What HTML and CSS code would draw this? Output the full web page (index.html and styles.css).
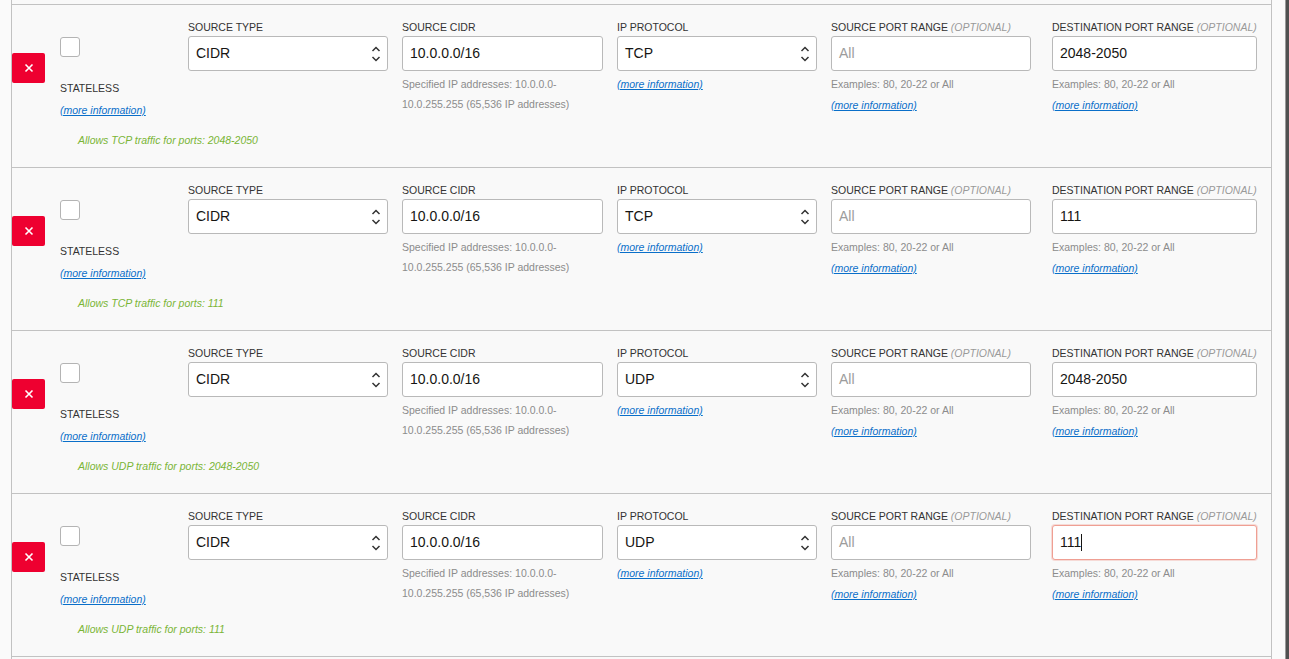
FILE: index.html
```html
<!DOCTYPE html>
<html lang="en">
<head>
<meta charset="utf-8">
<title>Ingress Rules</title>
<link rel="stylesheet" href="styles.css">
</head>
<body>
<div class="page">
  <div class="panel">
    <div class="stub"></div>

    <section class="rule">
      <div class="rule-main">
        <div class="remove-col">
          <button class="remove-btn" aria-label="Remove rule"><svg width="10" height="10" viewBox="0 0 10 10"><path d="M1.5 1.5 L8.5 8.5 M8.5 1.5 L1.5 8.5" stroke="#fff" stroke-width="1.6" fill="none"/></svg></button>
        </div>
        <div class="stateless-col">
          <span class="checkbox"></span>
          <div class="stateless-label">STATELESS</div>
          <a class="more" href="#">(more information)</a>
        </div>
        <div class="fields">
          <div class="field">
            <div class="field-label">SOURCE TYPE</div>
            <div class="box select">CIDR<svg class="chev" width="10" height="16" viewBox="0 0 10 16"><path d="M1.5 5 L5 1.5 L8.5 5 M1.5 11 L5 14.5 L8.5 11" stroke="#333" stroke-width="1.5" fill="none"/></svg></div>
          </div>
          <div class="field wide">
            <div class="field-label">SOURCE CIDR</div>
            <div class="box">10.0.0.0/16</div>
            <div class="help">Specified IP addresses: 10.0.0.0-<br>10.0.255.255 (65,536 IP addresses)</div>
          </div>
          <div class="field">
            <div class="field-label">IP PROTOCOL</div>
            <div class="box select">TCP<svg class="chev" width="10" height="16" viewBox="0 0 10 16"><path d="M1.5 5 L5 1.5 L8.5 5 M1.5 11 L5 14.5 L8.5 11" stroke="#333" stroke-width="1.5" fill="none"/></svg></div>
            <a class="more help-link" href="#">(more information)</a>
          </div>
          <div class="field">
            <div class="field-label">SOURCE PORT RANGE <em>(OPTIONAL)</em></div>
            <div class="box placeholder">All</div>
            <div class="help">Examples: 80, 20-22 or All</div>
            <a class="more port-link" href="#">(more information)</a>
          </div>
          <div class="field dest">
            <div class="field-label">DESTINATION PORT RANGE <em>(OPTIONAL)</em></div>
            <div class="box">2048-2050</div>
            <div class="help">Examples: 80, 20-22 or All</div>
            <a class="more port-link" href="#">(more information)</a>
          </div>
        </div>
      </div>
      <div class="note">Allows TCP traffic for ports: 2048-2050</div>
    </section>

    <section class="rule">
      <div class="rule-main">
        <div class="remove-col">
          <button class="remove-btn" aria-label="Remove rule"><svg width="10" height="10" viewBox="0 0 10 10"><path d="M1.5 1.5 L8.5 8.5 M8.5 1.5 L1.5 8.5" stroke="#fff" stroke-width="1.6" fill="none"/></svg></button>
        </div>
        <div class="stateless-col">
          <span class="checkbox"></span>
          <div class="stateless-label">STATELESS</div>
          <a class="more" href="#">(more information)</a>
        </div>
        <div class="fields">
          <div class="field">
            <div class="field-label">SOURCE TYPE</div>
            <div class="box select">CIDR<svg class="chev" width="10" height="16" viewBox="0 0 10 16"><path d="M1.5 5 L5 1.5 L8.5 5 M1.5 11 L5 14.5 L8.5 11" stroke="#333" stroke-width="1.5" fill="none"/></svg></div>
          </div>
          <div class="field wide">
            <div class="field-label">SOURCE CIDR</div>
            <div class="box">10.0.0.0/16</div>
            <div class="help">Specified IP addresses: 10.0.0.0-<br>10.0.255.255 (65,536 IP addresses)</div>
          </div>
          <div class="field">
            <div class="field-label">IP PROTOCOL</div>
            <div class="box select">TCP<svg class="chev" width="10" height="16" viewBox="0 0 10 16"><path d="M1.5 5 L5 1.5 L8.5 5 M1.5 11 L5 14.5 L8.5 11" stroke="#333" stroke-width="1.5" fill="none"/></svg></div>
            <a class="more help-link" href="#">(more information)</a>
          </div>
          <div class="field">
            <div class="field-label">SOURCE PORT RANGE <em>(OPTIONAL)</em></div>
            <div class="box placeholder">All</div>
            <div class="help">Examples: 80, 20-22 or All</div>
            <a class="more port-link" href="#">(more information)</a>
          </div>
          <div class="field dest">
            <div class="field-label">DESTINATION PORT RANGE <em>(OPTIONAL)</em></div>
            <div class="box">111</div>
            <div class="help">Examples: 80, 20-22 or All</div>
            <a class="more port-link" href="#">(more information)</a>
          </div>
        </div>
      </div>
      <div class="note">Allows TCP traffic for ports: 111</div>
    </section>

    <section class="rule">
      <div class="rule-main">
        <div class="remove-col">
          <button class="remove-btn" aria-label="Remove rule"><svg width="10" height="10" viewBox="0 0 10 10"><path d="M1.5 1.5 L8.5 8.5 M8.5 1.5 L1.5 8.5" stroke="#fff" stroke-width="1.6" fill="none"/></svg></button>
        </div>
        <div class="stateless-col">
          <span class="checkbox"></span>
          <div class="stateless-label">STATELESS</div>
          <a class="more" href="#">(more information)</a>
        </div>
        <div class="fields">
          <div class="field">
            <div class="field-label">SOURCE TYPE</div>
            <div class="box select">CIDR<svg class="chev" width="10" height="16" viewBox="0 0 10 16"><path d="M1.5 5 L5 1.5 L8.5 5 M1.5 11 L5 14.5 L8.5 11" stroke="#333" stroke-width="1.5" fill="none"/></svg></div>
          </div>
          <div class="field wide">
            <div class="field-label">SOURCE CIDR</div>
            <div class="box">10.0.0.0/16</div>
            <div class="help">Specified IP addresses: 10.0.0.0-<br>10.0.255.255 (65,536 IP addresses)</div>
          </div>
          <div class="field">
            <div class="field-label">IP PROTOCOL</div>
            <div class="box select">UDP<svg class="chev" width="10" height="16" viewBox="0 0 10 16"><path d="M1.5 5 L5 1.5 L8.5 5 M1.5 11 L5 14.5 L8.5 11" stroke="#333" stroke-width="1.5" fill="none"/></svg></div>
            <a class="more help-link" href="#">(more information)</a>
          </div>
          <div class="field">
            <div class="field-label">SOURCE PORT RANGE <em>(OPTIONAL)</em></div>
            <div class="box placeholder">All</div>
            <div class="help">Examples: 80, 20-22 or All</div>
            <a class="more port-link" href="#">(more information)</a>
          </div>
          <div class="field dest">
            <div class="field-label">DESTINATION PORT RANGE <em>(OPTIONAL)</em></div>
            <div class="box">2048-2050</div>
            <div class="help">Examples: 80, 20-22 or All</div>
            <a class="more port-link" href="#">(more information)</a>
          </div>
        </div>
      </div>
      <div class="note">Allows UDP traffic for ports: 2048-2050</div>
    </section>

    <section class="rule">
      <div class="rule-main">
        <div class="remove-col">
          <button class="remove-btn" aria-label="Remove rule"><svg width="10" height="10" viewBox="0 0 10 10"><path d="M1.5 1.5 L8.5 8.5 M8.5 1.5 L1.5 8.5" stroke="#fff" stroke-width="1.6" fill="none"/></svg></button>
        </div>
        <div class="stateless-col">
          <span class="checkbox"></span>
          <div class="stateless-label">STATELESS</div>
          <a class="more" href="#">(more information)</a>
        </div>
        <div class="fields">
          <div class="field">
            <div class="field-label">SOURCE TYPE</div>
            <div class="box select">CIDR<svg class="chev" width="10" height="16" viewBox="0 0 10 16"><path d="M1.5 5 L5 1.5 L8.5 5 M1.5 11 L5 14.5 L8.5 11" stroke="#333" stroke-width="1.5" fill="none"/></svg></div>
          </div>
          <div class="field wide">
            <div class="field-label">SOURCE CIDR</div>
            <div class="box">10.0.0.0/16</div>
            <div class="help">Specified IP addresses: 10.0.0.0-<br>10.0.255.255 (65,536 IP addresses)</div>
          </div>
          <div class="field">
            <div class="field-label">IP PROTOCOL</div>
            <div class="box select">UDP<svg class="chev" width="10" height="16" viewBox="0 0 10 16"><path d="M1.5 5 L5 1.5 L8.5 5 M1.5 11 L5 14.5 L8.5 11" stroke="#333" stroke-width="1.5" fill="none"/></svg></div>
            <a class="more help-link" href="#">(more information)</a>
          </div>
          <div class="field">
            <div class="field-label">SOURCE PORT RANGE <em>(OPTIONAL)</em></div>
            <div class="box placeholder">All</div>
            <div class="help">Examples: 80, 20-22 or All</div>
            <a class="more port-link" href="#">(more information)</a>
          </div>
          <div class="field dest">
            <div class="field-label">DESTINATION PORT RANGE <em>(OPTIONAL)</em></div>
            <div class="box focused">111<span class="caret"></span></div>
            <div class="help">Examples: 80, 20-22 or All</div>
            <a class="more port-link" href="#">(more information)</a>
          </div>
        </div>
      </div>
      <div class="note">Allows UDP traffic for ports: 111</div>
    </section>

    <div class="tail"></div>
  </div>
  <div class="gutter"></div>
  <div class="scrollbar"></div>
</div>
</body>
</html>
```

FILE: styles.css
```css
* { box-sizing: border-box; }

html, body {
  margin: 0;
  height: 100%;
  overflow: hidden;
  background: #fafafa;
  font-family: "Liberation Sans", Arial, sans-serif;
  color: #333;
}

.page {
  display: flex;
  height: 659px;
  padding-left: 11px;
}

.panel {
  width: 1261px;
  height: 100%;
  border-left: 1px solid #c2c2c2;
  border-right: 1px solid #c2c2c2;
  background: #f9f9f9;
  display: flex;
  flex-direction: column;
}

.stub { height: 4px; flex: none; }

.rule {
  flex: none;
  height: 163px;
  border-top: 1px solid #c2c2c2;
  display: flex;
  flex-direction: column;
}

.tail {
  flex: 1;
  border-top: 1px solid #c2c2c2;
}

.gutter { flex: 1; }

.scrollbar {
  width: 4px;
  background: #505050;
  border-left: 1px solid #9a9a9a;
}

.rule-main {
  display: flex;
  height: 115px;
}

.remove-col {
  width: 48px;
  flex: none;
  padding-top: 48px;
}

.remove-btn {
  width: 33px;
  height: 30px;
  padding: 0;
  border: none;
  border-radius: 2px;
  background: #ee0030;
  display: flex;
  align-items: center;
  justify-content: center;
  cursor: pointer;
}

.remove-btn svg { display: block; }

.stateless-col {
  width: 128px;
  flex: none;
  padding-top: 32px;
  display: flex;
  flex-direction: column;
  align-items: flex-start;
}

.checkbox {
  display: block;
  width: 20px;
  height: 20px;
  background: #fff;
  border: 1px solid #b4b4b4;
  border-radius: 3px;
}

.stateless-label {
  margin-top: 24px;
  font-size: 10.5px;
  line-height: 14px;
  color: #333;
}

.stateless-col .more { margin-top: 5px; }

.more {
  display: block;
  font-size: 10.5px;
  line-height: 20px;
  font-style: italic;
  color: #0a6fc9;
  text-decoration: underline;
}

.fields {
  display: flex;
  gap: 14px;
  padding-top: 15px;
}

.field {
  width: 200px;
  flex: none;
  display: flex;
  flex-direction: column;
  align-items: flex-start;
}

.field.wide { width: 201px; }

.field.dest {
  width: 205px;
  margin-left: 7px;
}

.field-label {
  font-size: 10.5px;
  line-height: 14px;
  color: #333;
  white-space: nowrap;
  margin-bottom: 2px;
}

.field-label em {
  color: #9a9a9a;
  font-style: italic;
}

.box {
  position: relative;
  width: 100%;
  height: 35px;
  background: #fff;
  border: 1px solid #b9b9b9;
  border-radius: 3px;
  padding: 0 8px 1px 7px;
  display: flex;
  align-items: center;
  font-size: 14px;
  color: #161513;
}

.box.placeholder { color: #9c9c9c; }

.box.focused {
  border-color: #ef9f93;
  box-shadow: 0 0 0 1px rgba(240, 160, 150, 0.35);
}

.caret {
  display: inline-block;
  width: 1px;
  height: 17px;
  background: #161513;
}

.chev {
  position: absolute;
  right: 6px;
  top: 9px;
}

.help {
  margin-top: 3px;
  font-size: 10.5px;
  line-height: 20px;
  color: #8c8c8c;
}

.help-link { margin-top: 3px; }

.port-link { margin-top: 1px; }

.note {
  margin-top: 13px;
  padding-left: 66px;
  font-size: 10.5px;
  line-height: 14px;
  font-style: italic;
  color: #7ab536;
}
```
